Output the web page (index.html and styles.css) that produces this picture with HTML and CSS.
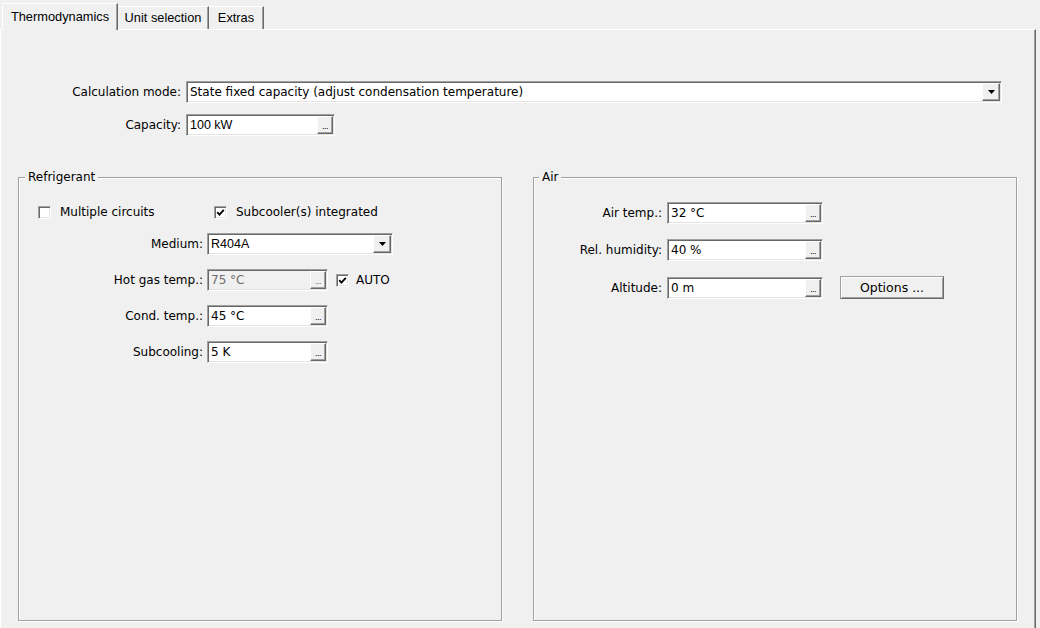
FILE: index.html
```html
<!DOCTYPE html>
<html lang="en">
    <head>
        <meta charset="UTF-8" />
        <title>Thermodynamics</title>
        <link rel="stylesheet" href="styles.css">
    </head>
    <body>
        <div class="tabs">
            <div class="tab active tab-thermo">Thermodynamics</div>
            <div class="tab tab-unit">Unit selection</div>
            <div class="tab tab-extras">Extras</div>
        </div>

        <div class="panel">
            <div class="form main-form">
                <label class="lbl">Calculation mode:</label>
                <div class="field combo calc-mode">
                    <span class="value">State fixed capacity (adjust condensation temperature)</span>
                    <span class="btn drop"><svg width="7" height="4" viewBox="0 0 7 4"><polygon points="0,0 7,0 3.5,4" fill="#000"/></svg></span>
                </div>
                <label class="lbl">Capacity:</label>
                <div class="field edit capacity">
                    <span class="value sans">100 kW</span>
                    <span class="btn dots">...</span>
                </div>
            </div>

            <div class="groups">
                <div class="group refrigerant">
                    <span class="caption">Refrigerant</span>

                    <div class="checks">
                        <div class="check first">
                            <span class="box"></span>
                            <span>Multiple circuits</span>
                        </div>
                        <div class="check">
                            <span class="box"><svg width="9" height="9" viewBox="0 0 9 9"><polyline points="1.2,4.2 3.4,6.6 7.8,1.8" fill="none" stroke="#000" stroke-width="1.8"/></svg></span>
                            <span>Subcooler(s) integrated</span>
                        </div>
                    </div>

                    <div class="form group-form ref-form">
                        <label class="lbl">Medium:</label>
                        <div class="field combo medium">
                            <span class="value sans">R404A</span>
                            <span class="btn drop"><svg width="7" height="4" viewBox="0 0 7 4"><polygon points="0,0 7,0 3.5,4" fill="#000"/></svg></span>
                        </div>

                        <label class="lbl">Hot gas temp.:</label>
                        <div class="row-controls">
                            <div class="field edit short disabled">
                                <span class="value">75 °C</span>
                                <span class="btn dots">...</span>
                            </div>
                            <div class="check auto">
                                <span class="box"><svg width="9" height="9" viewBox="0 0 9 9"><polyline points="1.2,4.2 3.4,6.6 7.8,1.8" fill="none" stroke="#000" stroke-width="1.8"/></svg></span>
                                <span>AUTO</span>
                            </div>
                        </div>

                        <label class="lbl">Cond. temp.:</label>
                        <div class="field edit short">
                            <span class="value">45 °C</span>
                            <span class="btn dots">...</span>
                        </div>

                        <label class="lbl">Subcooling:</label>
                        <div class="field edit short">
                            <span class="value">5 K</span>
                            <span class="btn dots">...</span>
                        </div>
                    </div>
                </div>

                <div class="group air">
                    <span class="caption">Air</span>

                    <div class="form group-form air-form">
                        <label class="lbl">Air temp.:</label>
                        <div class="field edit air-edit">
                            <span class="value">32 °C</span>
                            <span class="btn dots">...</span>
                        </div>

                        <label class="lbl">Rel. humidity:</label>
                        <div class="field edit air-edit">
                            <span class="value">40 %</span>
                            <span class="btn dots">...</span>
                        </div>

                        <label class="lbl">Altitude:</label>
                        <div class="row-controls">
                            <div class="field edit air-edit">
                                <span class="value">0 m</span>
                                <span class="btn dots">...</span>
                            </div>
                            <button class="push">Options ...</button>
                        </div>
                    </div>
                </div>
            </div>
        </div>
    </body>
</html>
```

FILE: styles.css
```css
body {
    margin: 0;
    width: 1040px;
    height: 628px;
    overflow: hidden;
    background: #f0f0f0;
    font-family: "DejaVu Sans", sans-serif;
    font-size: 12px;
    color: #000;
}

/* tab strip */
.tabs {
    display: flex;
    align-items: flex-end;
    height: 29px;
    padding-left: 2px;
    font-family: "Liberation Sans", Arial, sans-serif;
    font-size: 12.8px;
}
.tab {
    box-sizing: border-box;
    height: 23px;
    line-height: 22px;
    text-align: center;
    border-top: 1px solid #fff;
    border-right: 1px solid #696969;
    box-shadow: inset -1px 0 0 #a0a0a0;
}
.tab.active {
    position: relative;
    z-index: 1;
    height: 27px;
    margin-bottom: -1px;
    line-height: 26px;
    border-left: 1px solid #fff;
    background: #f0f0f0;
}
.tab-thermo { width: 116px; }
.tab-unit { width: 91px; }
.tab-extras { width: 55px; }

.panel {
    box-sizing: border-box;
    width: 1036px;
    height: 599px;
    padding-top: 51px;
    border-top: 1px solid #fff;
    border-left: 1px solid #fff;
    border-right: 1px solid #696969;
    box-shadow: inset -1px 0 0 #a0a0a0;
}

/* label / control grids */
.form {
    display: grid;
    align-items: center;
    justify-items: start;
}
.lbl {
    justify-self: end;
    white-space: nowrap;
}
.main-form {
    grid-template-columns: 180px auto;
    column-gap: 5px;
    row-gap: 11px;
}
.ref-form {
    grid-template-columns: 165px auto;
    column-gap: 4px;
    row-gap: 14px;
    margin-top: 14px;
}
.air-form {
    grid-template-columns: 128px auto;
    column-gap: 5px;
    row-gap: 15px;
}
.row-controls {
    display: flex;
    align-items: center;
}

/* sunken edit and combo boxes */
.field {
    box-sizing: border-box;
    display: flex;
    align-items: stretch;
    height: 22px;
    padding: 1px;
    background: #fff;
    border: 1px solid;
    border-color: #a0a0a0 #fff #fff #a0a0a0;
    box-shadow: inset 1px 1px 0 #696969, inset -1px -1px 0 #e3e3e3;
}
.field.disabled {
    background: #f0f0f0;
    color: #6d6d6d;
}
.value {
    flex: 1;
    padding-left: 2px;
    line-height: 18px;
    white-space: nowrap;
    overflow: hidden;
}
.sans {
    font-family: "Liberation Sans", Arial, sans-serif;
    font-size: 12.5px;
}
.calc-mode { width: 816px; }
.capacity { width: 149px; }
.medium { width: 186px; }
.short { width: 121px; }
.air-edit { width: 156px; }

/* raised buttons inside fields */
.btn {
    box-sizing: border-box;
    display: flex;
    justify-content: center;
    background: #f0f0f0;
    border: 1px solid;
    border-color: #fff #696969 #696969 #fff;
    box-shadow: inset -1px -1px 0 #a0a0a0;
}
.dots {
    width: 16px;
    align-items: flex-end;
    font-family: "Liberation Sans", Arial, sans-serif;
    font-size: 9px;
    line-height: 9px;
    padding-bottom: 2px;
    letter-spacing: -0.5px;
}
.drop {
    width: 18px;
    align-items: center;
}
.drop svg {
    display: block;
}

/* group boxes */
.groups {
    display: flex;
    gap: 31px;
    margin-top: 41px;
    padding-left: 17px;
}
.group {
    position: relative;
    box-sizing: border-box;
    width: 484px;
    height: 444px;
    border: 1px solid #a0a0a0;
    box-shadow: 1px 1px 0 #fff, inset 1px 1px 0 #fff;
}
.caption {
    position: absolute;
    top: -8px;
    left: 5px;
    padding: 0 3px;
    line-height: 15px;
    background: #f0f0f0;
}
.refrigerant {
    padding: 27px 0 0 19px;
}
.refrigerant .caption {
    left: 6px;
}
.air {
    padding-top: 24px;
}

/* checkboxes */
.checks {
    display: flex;
    height: 14px;
    align-items: center;
}
.check {
    display: flex;
    align-items: center;
    gap: 9px;
}
.check.first {
    width: 176px;
}
.box {
    box-sizing: border-box;
    display: flex;
    align-items: center;
    justify-content: center;
    width: 13px;
    height: 13px;
    background: #fff;
    border: 1px solid;
    border-color: #a0a0a0 #fff #fff #a0a0a0;
    box-shadow: inset 1px 1px 0 #696969, inset -1px -1px 0 #e3e3e3;
}
.box svg {
    display: block;
}
.check.auto {
    margin-left: 8px;
    gap: 7px;
}

.push {
    box-sizing: border-box;
    width: 104px;
    height: 23px;
    margin-left: 17px;
    padding: 0;
    font-family: "DejaVu Sans", sans-serif;
    font-size: 12.5px;
    color: #000;
    background: #f0f0f0;
    border: 1px solid;
    border-color: #a0a0a0 #696969 #696969 #a0a0a0;
    box-shadow: inset 1px 1px 0 #fff, inset -1px -1px 0 #a0a0a0;
}
```
